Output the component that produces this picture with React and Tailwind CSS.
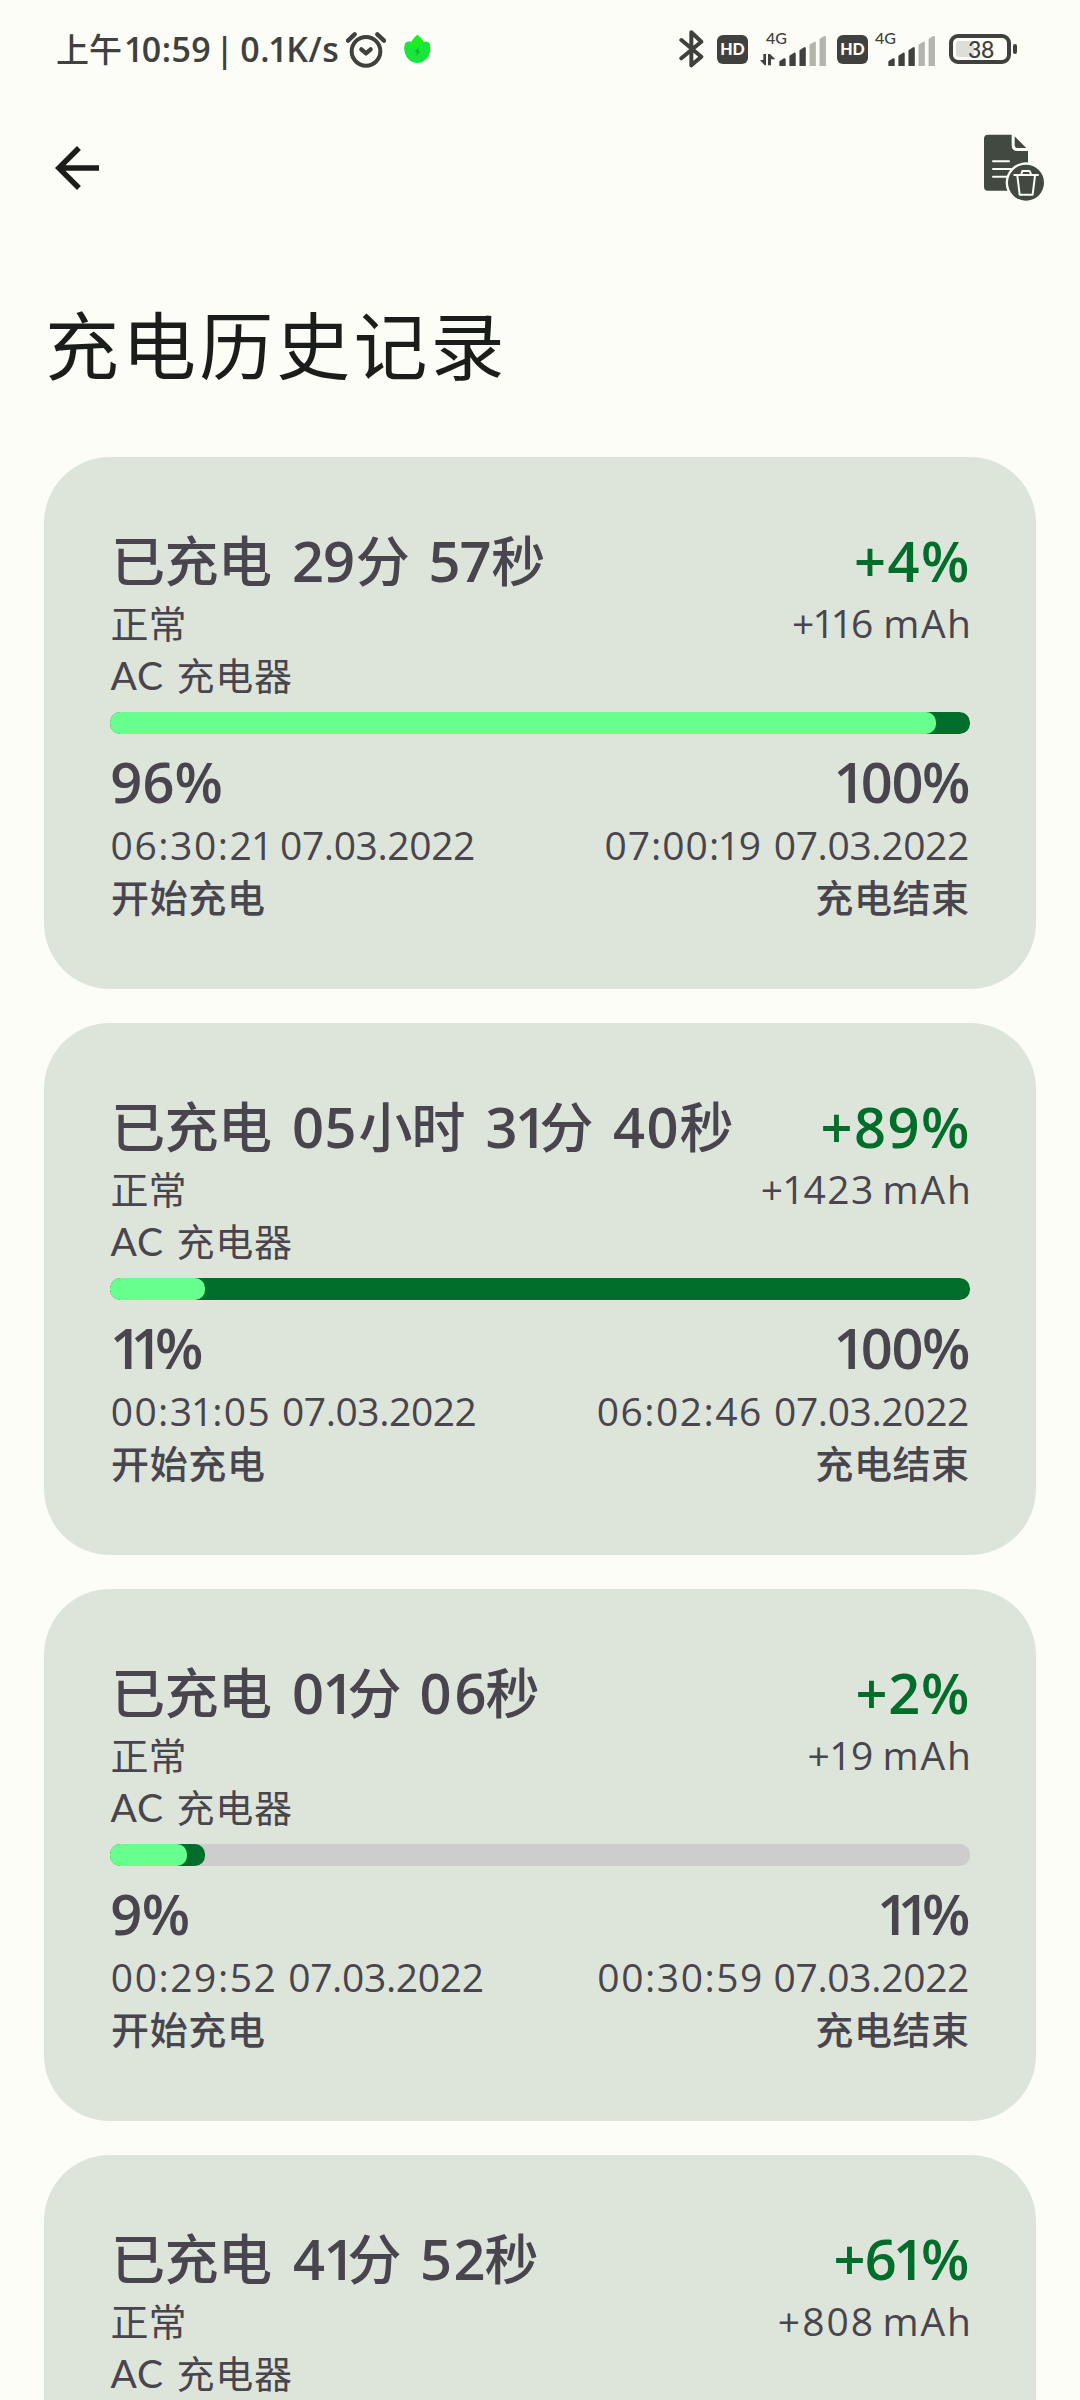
import { useMemo } from 'react';

const LATIN = '"Open Sans", sans-serif';
const LATIN_CAPS = 'Lato, sans-serif';
const CJK = '"Noto Sans CJK SC", sans-serif';
const ONE_TRIM = 0.06;

const isCjk = (text) => /[\u4e00-\u9fff]/.test(text);
const familyOf = (text) => (isCjk(text) ? CJK : /^[A-Z]+$/.test(text) ? LATIN_CAPS : LATIN);
const canvas = document.createElement('canvas').getContext('2d');

// Sets one run of text so that its visible glyphs span exactly `width` pixels.
// The digit 1 is trimmed on its inner sides, giving proportional figures.
function Run({ text, width, gap = 0, size, weight = 400 }) {
  const family = familyOf(text);
  const chars = [...text];
  const last = chars.length - 1;
  const fit = useMemo(() => {
    canvas.font = `${weight} ${size}px ${family}`;
    const m = canvas.measureText(text);
    let ink = m.actualBoundingBoxLeft + m.actualBoundingBoxRight;
    chars.forEach((c, i) => {
      if (c === '1') ink -= ((i > 0) + (i < last)) * ONE_TRIM * size;
    });
    return {
      spacing: last > 0 ? (width - ink) / last : 0,
      indent: m.actualBoundingBoxLeft + (last > 0 ? 0 : (width - ink) / 2),
    };
  }, [text, width, size, weight, family]);
  return (
    <span
      className="block shrink-0 whitespace-pre"
      style={{
        width,
        marginLeft: gap,
        fontSize: size,
        fontWeight: weight,
        fontFamily: family,
        letterSpacing: fit.spacing,
        textIndent: fit.indent,
      }}
    >
      {chars.map((c, i) =>
        c === '1' ? (
          <span
            key={i}
            style={{
              marginLeft: i > 0 ? -ONE_TRIM * size : 0,
              marginRight: i < last ? -ONE_TRIM * size : 0,
            }}
          >
            1
          </span>
        ) : (
          c
        ),
      )}
    </span>
  );
}

function Runs({ runs, size, cjkSize = size, weight, cjkWeight = weight, className = '' }) {
  return (
    <div className={`flex items-baseline ${className}`}>
      {runs.map(([text, width, gap], i) => (
        <Run
          key={i}
          text={text}
          width={width}
          gap={gap}
          size={isCjk(text) ? cjkSize : size}
          weight={isCjk(text) ? cjkWeight : weight}
        />
      ))}
    </div>
  );
}

const records = [
  {
    title: [['已充电', 156, 5], ['29', 59, 23], ['分', 48.5, 6], ['57', 58, 24], ['秒', 49.5, 3.5]],
    gain: [['+4%', 112]],
    charge: [['+116', 79], ['mAh', 81.7, 14.3]],
    from: 96,
    to: 100,
    fromRun: [['96%', 109.2, 2.3]],
    toRun: [['100%', 131.5]],
    start: [['06:30:21', 153.4, 1.6], ['07.03.2022', 193, 16]],
    end: [['07:00:19', 154.3], ['07.03.2022', 193.3, 15]],
  },
  {
    title: [['已充电', 156, 5], ['05', 60.5, 23], ['小时', 105, 5], ['31', 49.6, 23], ['分', 49, 5.4], ['40', 62.5, 22.5], ['秒', 49, 5]],
    gain: [['+89%', 145.6]],
    charge: [['+1423', 109.3], ['mAh', 82.5, 14.5]],
    from: 11,
    to: 100,
    fromRun: [['11%', 88, 4]],
    toRun: [['100%', 131.5]],
    start: [['00:31:05', 156.6, 1.8], ['07.03.2022', 192.5, 14.6]],
    end: [['06:02:46', 162.2], ['07.03.2022', 193, 15]],
  },
  {
    title: [['已充电', 156, 5], ['01', 50.5, 23], ['分', 49, 6], ['06', 63, 22], ['秒', 49, 3]],
    gain: [['+2%', 110.5]],
    charge: [['+19', 63.5], ['mAh', 82.5, 13.5]],
    from: 9,
    to: 11,
    fromRun: [['9%', 76.4, 2.3]],
    toRun: [['11%', 88]],
    start: [['00:29:52', 162.7, 1.8], ['07.03.2022', 193.5, 14.7]],
    end: [['00:30:59', 162.7], ['07.03.2022', 193.5, 13.5]],
  },
  {
    title: [['已充电', 156, 5], ['41', 51.5, 23], ['分', 49, 5], ['52', 60.5, 23.5], ['秒', 49, 3]],
    gain: [['+61%', 132.6]],
    charge: [['+808', 93], ['mAh', 82.5, 13.7]],
  },
];

function LevelBar({ from, to }) {
  return (
    <div className="mt-[15px] grid h-[22px] overflow-hidden rounded-[10px] bg-[#cdcdcd]">
      <div className="col-start-1 row-start-1 rounded-[10px] bg-[#006e2a]" style={{ width: `${to}%` }} />
      <div className="col-start-1 row-start-1 rounded-[10px] bg-[#67ff8e]" style={{ width: `${from}%` }} />
    </div>
  );
}

function ChargeRange({ record }) {
  return (
    <>
      <LevelBar from={record.from} to={record.to} />
      <div className="mt-[14px] flex h-[66px] items-baseline justify-between leading-[66px]">
        <Runs runs={record.fromRun} size={56} weight={600} />
        <Runs runs={record.toRun} size={56} weight={600} className="pr-px" />
      </div>
      <div className="flex h-[62px] items-baseline justify-between leading-[62px]">
        <Runs runs={record.start} size={39} />
        <Runs runs={record.end} size={39} className="pr-[2px]" />
      </div>
      <div className="flex h-[39px] items-baseline justify-between leading-[39px]">
        <Runs runs={[['开始充电', 152, 2]]} size={38} weight={500} />
        <Runs runs={[['充电结束', 151.7]]} size={38} weight={500} className="pr-[2px]" />
      </div>
    </>
  );
}

function RecordCard({ record }) {
  return (
    <article className="h-[532px] shrink-0 rounded-[66px] bg-[#dde5da] p-[66px] text-[#49454e]">
      <div className="flex h-[70px] items-baseline justify-between leading-[71px]">
        <Runs runs={record.title} size={56} cjkSize={54} weight={600} cjkWeight={500} />
        <Runs runs={record.gain} size={56} weight={650} className="pr-[2px] text-[#006e2a]" />
      </div>
      <div className="flex h-[57px] items-baseline justify-between leading-[58px]">
        <Runs runs={[['正常', 72, 1.5]]} size={38} />
        <Runs runs={record.charge} size={39} className="pr-[2px]" />
      </div>
      <div className="h-[47px] leading-[47px]">
        <Runs runs={[['AC', 52.4, 0.6], ['充电器', 112.5, 15.5]]} size={39} cjkSize={38} />
      </div>
      {record.start && <ChargeRange record={record} />}
    </article>
  );
}

function AlarmIcon() {
  return (
    <svg className="h-[37px] w-[40px] shrink-0" viewBox="0 0 120 111" fill="none" stroke="#40403e" strokeLinecap="round" strokeLinejoin="round">
      <circle cx="60" cy="61" r="43" strokeWidth="12" />
      <path d="M6 29 L26 10 M94 10 L114 29" strokeWidth="13" />
      <path d="M46 55 L60 67 L74 55" strokeWidth="13" />
    </svg>
  );
}

function LeafBadge() {
  return (
    <svg className="ml-[16px] h-[31px] w-[31px] shrink-0" viewBox="0 0 93 93">
      <rect width="93" height="93" rx="20" fill="#fff" />
      <path d="M46 2 C40 9 33 13 28 24 C20 21 13 24 10 27 C6 34 6 46 8 55 C13 75 28 87 46 87 C64 87 79 75 84 55 C86 46 86 34 82 27 C79 24 72 21 65 24 C60 13 53 9 46 2Z" fill="#18e63a" />
      <path d="M46 2 C40 9 33 13 28 24 C25 30 25 36 27 40 C38 42 48 31 66 27 C61 13 53 9 46 2Z" fill="#1cf01c" />
      <path d="M50 41 L37 54 H45 L42 66 L56 52 H48Z" fill="#0fb52e" />
    </svg>
  );
}

function BluetoothIcon() {
  return (
    <svg className="h-[40px] w-[26px] shrink-0" viewBox="0 0 78 120" fill="none" stroke="#40403e" strokeWidth="12" strokeLinecap="round" strokeLinejoin="round">
      <path d="M7 33 L67 83 L37 109 V10 L67 38 L7 88" />
    </svg>
  );
}

function HdBadge() {
  return (
    <span className="flex h-[29px] w-[31px] shrink-0 items-center justify-center rounded-[6px] bg-[#40403e] font-[Lato] text-[16px] leading-none font-black text-[#fcfdf6]">
      HD
    </span>
  );
}

function Signal({ data }) {
  return (
    <span className={data ? 'relative block h-[34px] w-[66px] shrink-0' : 'relative block h-[34px] w-[61px] shrink-0'}>
      <span
        className={
          data
            ? 'absolute top-[-2px] left-[6px] font-[Lato] text-[16px] leading-[16px] font-medium'
            : 'absolute top-[-2px] left-px font-[Lato] text-[16px] leading-[16px] font-medium'
        }
      >
        4G
      </span>
      <svg className="absolute right-0 bottom-0 h-[31px] w-[66px]" viewBox="0 0 198 93">
        {data && <path d="M0 75 H10 V57 H18 V91 H14Z M24 91 V57 H30 L46 73 H33 V91Z" fill="#40403e" />}
        {[0, 1, 2, 3, 4].map((i) => {
          const x = 58 + i * 30.2;
          const y = 70 - i * 16.7;
          return (
            <path
              key={i}
              d={`M${x} ${y + 9} L${x + 14} ${y} Q${x + 19} ${y - 2} ${x + 19} ${y + 4} V93 H${x}Z`}
              fill={i < 3 ? '#40403e' : '#b3b4ae'}
            />
          );
        })}
      </svg>
    </span>
  );
}

function Battery() {
  return (
    <span className="ml-[14px] flex shrink-0 items-center">
      <span className="flex h-[30px] w-[62px] rounded-[9px] border-4 border-[#40403e] p-[3px]">
        <span className="flex h-[16px] w-[48px] rounded-[3px] bg-linear-to-r from-[#deded9] from-38% to-transparent to-38% pl-[12px]">
          <span className="font-[Lato] text-[23px] leading-[16px] font-medium tracking-[-0.3px]">38</span>
        </span>
      </span>
      <span className="ml-[2px] h-[10px] w-[4px] rounded-[2px] bg-[#40403e]" />
    </span>
  );
}

function StatusBar() {
  return (
    <header className="flex h-[98px] shrink-0 items-center justify-between pr-[63px] pl-[57px] text-[#40403e]">
      <div className="flex items-center leading-[44px]">
        <Runs
          runs={[['上午', 64], ['10:59', 83.3, 5], ['|', 4, 13], ['0.1K/s', 97, 15]]}
          size={34}
          cjkSize={33}
          weight={550}
          cjkWeight={500}
          className="-mt-px"
        />
        <div className="ml-[8px] flex items-center">
          <AlarmIcon />
          <LeafBadge />
        </div>
      </div>
      <div className="flex items-center">
        <BluetoothIcon />
        <span className="ml-[12px]"><HdBadge /></span>
        <span className="ml-[12px]"><Signal data /></span>
        <span className="ml-[11px]"><HdBadge /></span>
        <span className="ml-[6px]"><Signal /></span>
        <Battery />
      </div>
    </header>
  );
}

function BackIcon() {
  return (
    <svg className="h-[66px] w-[66px]" viewBox="0 0 24 24" fill="#1b1d1a">
      <path d="M20 11H7.83l5.59-5.59L12 4l-8 8 8 8 1.41-1.41L7.83 13H20v-2z" />
    </svg>
  );
}

function ClearHistoryIcon() {
  return (
    <svg className="-mt-[2px] h-[67px] w-[60px]" viewBox="72 73 180 201">
      <path d="M84 75 H155 V106 Q155 124 173 124 H204 V243 H84 Q72 243 72 231 V87 Q72 75 84 75Z" fill="#424940" />
      <path d="M164 80 L199 115 H174 Q164 115 164 105Z" fill="#424940" />
      <path d="M99 155 H147 M99 178 H156 M99 201 H142" stroke="#fcfdf6" strokeWidth="6" strokeLinecap="round" />
      <circle cx="198" cy="219" r="61" fill="#fcfdf6" />
      <circle cx="198" cy="219" r="54" fill="#424940" />
      <g fill="none" stroke="#fcfdf6" strokeWidth="6" strokeLinejoin="round" strokeLinecap="round">
        <path d="M163 196 H234" />
        <path d="M184 194 L187 184 H209 L213 194" />
        <path d="M172 198 L179 255 H218 L225 198" />
      </g>
    </svg>
  );
}

export default function App() {
  return (
    <div className="flex h-[2400px] w-[1080px] flex-col overflow-hidden bg-[#fcfdf6]">
      <StatusBar />
      <nav className="flex h-[140px] shrink-0 items-center justify-between pr-[36px] pl-[44px]">
        <button type="button" aria-label="返回"><BackIcon /></button>
        <button type="button" aria-label="清除历史记录"><ClearHistoryIcon /></button>
      </nav>
      <h1 className="h-[219px] shrink-0 pt-[51px] pl-[49px] leading-[106px] text-[#1b1d1a]">
        <Runs runs={[['充电历史记录', 452.4]]} size={74} />
      </h1>
      <main className="flex flex-col gap-[34px] px-[44px]">
        {records.map((record, i) => (
          <RecordCard key={i} record={record} />
        ))}
      </main>
    </div>
  );
}
